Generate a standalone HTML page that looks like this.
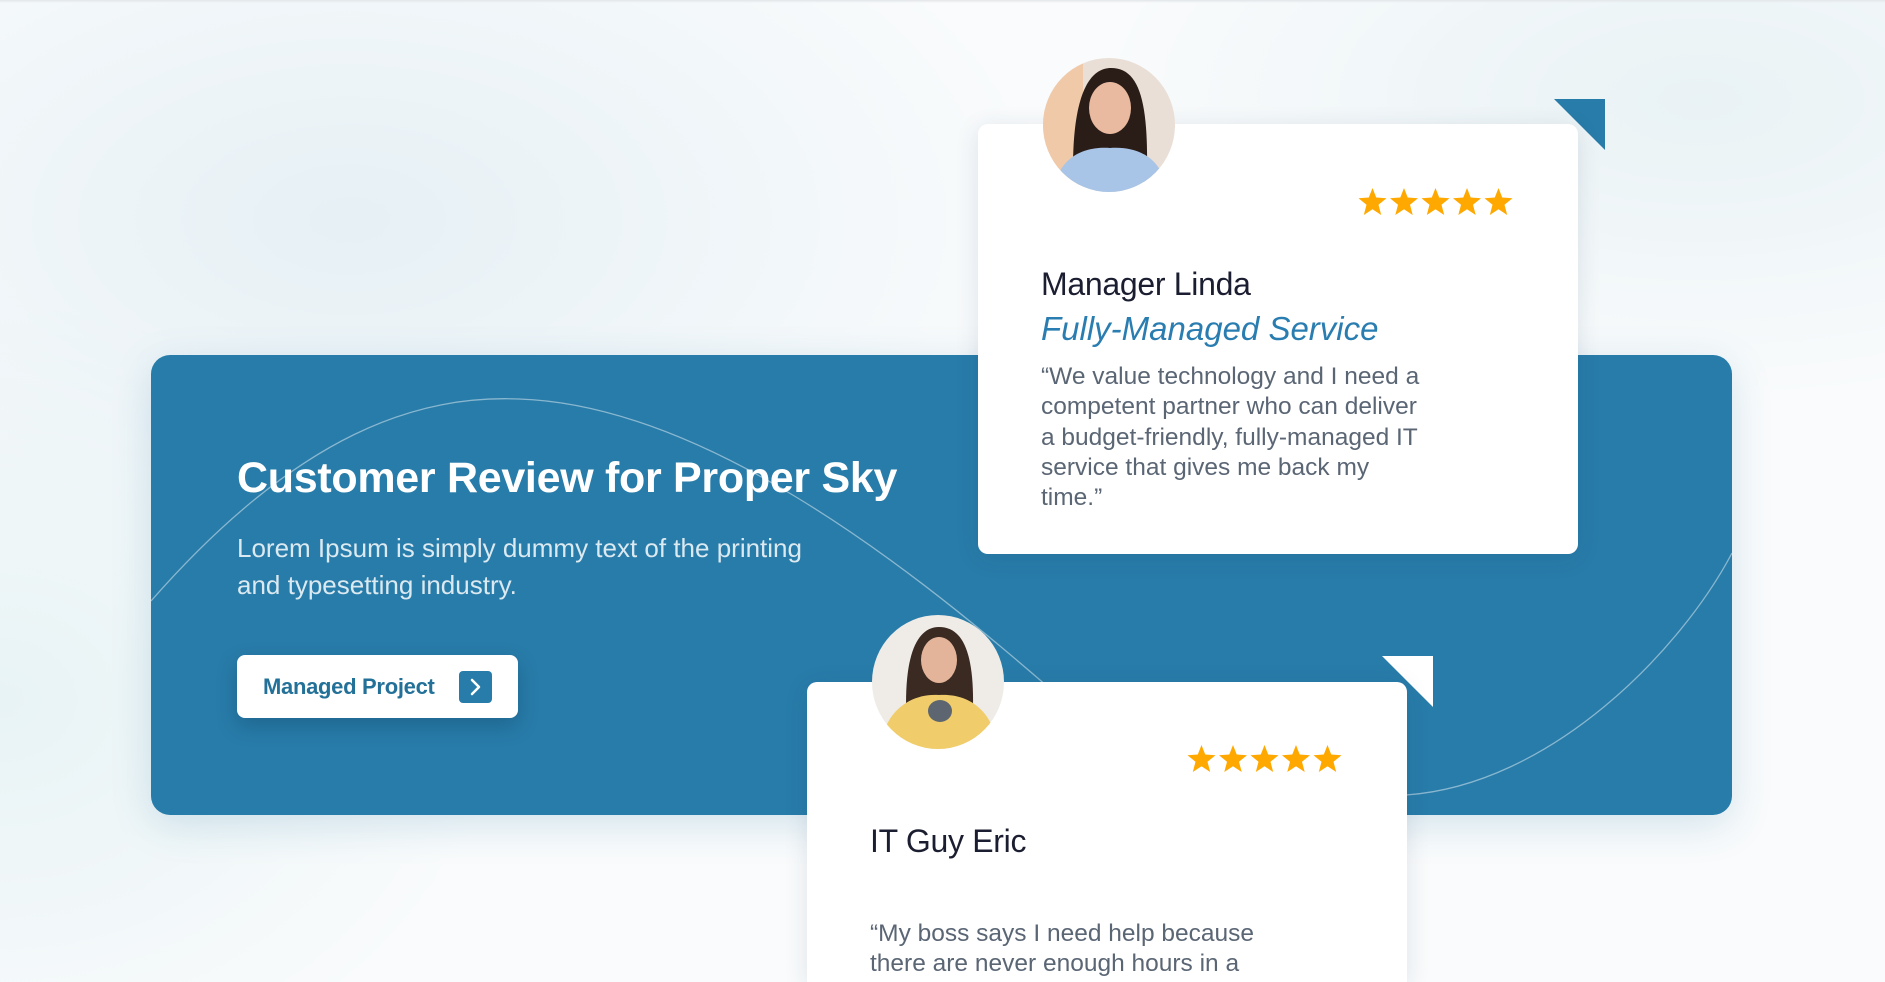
<!DOCTYPE html>
<html><head><meta charset="utf-8"><style>
*{margin:0;padding:0;box-sizing:border-box}
html{width:1885px;height:982px;overflow:hidden}
body{width:1885px;height:982px;overflow:hidden;position:relative;font-family:"Liberation Sans",sans-serif;
background:radial-gradient(ellipse 700px 400px at 350px 220px,#e6f0f5 0%,rgba(230,240,245,0) 100%),radial-gradient(ellipse 600px 300px at 1700px 100px,#e9f2f5 0%,rgba(233,242,245,0) 100%),radial-gradient(ellipse 500px 400px at 0px 700px,#e8f3f5 0%,rgba(232,243,245,0) 100%),#f9fbfc;}
.topline{position:absolute;left:0;top:0;width:1885px;height:3px;background:linear-gradient(#e3e6e8,rgba(255,255,255,0))}
.box{position:absolute;left:151px;top:355px;width:1581px;height:460px;background:#287ca9;border-radius:19px;overflow:hidden;box-shadow:0 10px 40px rgba(40,124,169,.18)}
.h1{position:absolute;left:237px;top:454px;color:#fff;font-size:43px;font-weight:bold;letter-spacing:-0.3px;white-space:nowrap}
.p{position:absolute;left:237px;top:530px;color:#dbe9f1;font-size:26px;line-height:37px;white-space:nowrap}
.btn{position:absolute;left:237px;top:655px;width:281px;height:63px;background:#fff;border-radius:8px;box-shadow:0 8px 20px rgba(0,40,70,.25)}
.btn span{position:absolute;left:26px;top:19px;font-size:22px;font-weight:bold;color:#237198;letter-spacing:-0.3px}
.btn i{position:absolute;left:222px;top:16px;width:33px;height:32px;background:#287ca9;border-radius:4px}
.card{position:absolute;background:#fff;border-radius:10px;box-shadow:0 4px 24px rgba(30,60,90,.12)}
.av{position:absolute;width:132px;height:134px;border-radius:50%;overflow:hidden}
.name{position:absolute;font-size:32px;color:#1b1d30;letter-spacing:-0.3px;white-space:nowrap}
.sub{position:absolute;font-size:33px;color:#2a7db0;font-style:italic;white-space:nowrap}
.q{position:absolute;font-size:24.5px;line-height:30.3px;color:#5b6675;white-space:nowrap}
.tri{position:absolute}
</style></head><body>
<div class="topline"></div>
<div class="box">
<svg width="1581" height="460" style="position:absolute;left:0;top:0"><path d="M0,246 C150,75 270,40 368,44 C550,50 750,205 889,325 C1000,425 1150,445 1255,440 C1400,430 1530,295 1581,198" fill="none" stroke="rgba(255,255,255,.45)" stroke-width="1.3"/></svg>
</div>
<div class="h1">Customer Review for Proper Sky</div>
<div class="p">Lorem Ipsum is simply dummy text of the printing<br>and typesetting industry.</div>
<div class="btn"><span>Managed Project</span><i><svg width="33" height="32"><path d="M13,9 L20,16 L13,23" fill="none" stroke="#fff" stroke-width="2.5" stroke-linecap="round" stroke-linejoin="round"/></svg></i></div>

<svg class="tri" style="left:1554px;top:99px" width="51" height="51"><polygon points="0,0 51,0 51,51" fill="#287ca9"/></svg>
<div class="card" style="left:978px;top:124px;width:600px;height:430px"></div>
<div class="av" style="left:1043px;top:58px">
<svg width="132" height="134"><rect width="132" height="134" fill="#eadfd6"/><rect x="0" y="0" width="40" height="134" fill="#f0c9a8"/><path d="M30,110 C30,40 45,10 68,10 C95,10 105,40 104,110 Z" fill="#2a1d18"/><ellipse cx="67" cy="50" rx="21" ry="26" fill="#e9b9a0"/><path d="M10,134 C15,100 40,88 67,90 C95,88 120,100 124,134 Z" fill="#a8c4e6"/></svg></div>
<svg style="position:absolute;left:1358px;top:188px" width="156" height="30"><g fill="#ffa800"><g id="s"><polygon points="14.5,0 18.2,9.5 28.5,10.2 20.5,16.8 23.2,27 14.5,21.3 5.8,27 8.5,16.8 0.5,10.2 10.8,9.5"/></g><use href="#s" x="31.5"/><use href="#s" x="63"/><use href="#s" x="94.5"/><use href="#s" x="126"/></g></svg>
<div class="name" style="left:1041px;top:266px">Manager Linda</div>
<div class="sub" style="left:1041px;top:310px">Fully-Managed Service</div>
<div class="q" style="left:1041px;top:362px">“We value technology and I need a<br>competent partner who can deliver<br>a budget-friendly, fully-managed IT<br>service that gives me back my<br>time.”</div>

<svg class="tri" style="left:1382px;top:656px" width="51" height="51"><polygon points="0,0 51,0 51,51" fill="#fff"/></svg>
<div class="card" style="left:807px;top:682px;width:600px;height:300px;border-radius:10px 10px 0 0"></div>
<div class="av" style="left:872px;top:615px">
<svg width="132" height="134"><rect width="132" height="134" fill="#efece8"/><path d="M35,115 C30,40 45,12 67,12 C92,12 105,40 100,115 Z" fill="#3a2a22"/><ellipse cx="67" cy="45" rx="18" ry="23" fill="#e4b49a"/><path d="M8,134 C12,95 40,78 67,80 C96,78 122,95 126,134 Z" fill="#f0cd6a"/><ellipse cx="68" cy="96" rx="12" ry="11" fill="#5d6670"/></svg></div>
<svg style="position:absolute;left:1187px;top:745px" width="156" height="30"><g fill="#ffa800"><use href="#s" x="0"/><use href="#s" x="31.5"/><use href="#s" x="63"/><use href="#s" x="94.5"/><use href="#s" x="126"/></g></svg>
<div class="name" style="left:870px;top:823px">IT Guy Eric</div>
<div class="q" style="left:870px;top:919px">“My boss says I need help because<br>there are never enough hours in a</div>
</body></html>
